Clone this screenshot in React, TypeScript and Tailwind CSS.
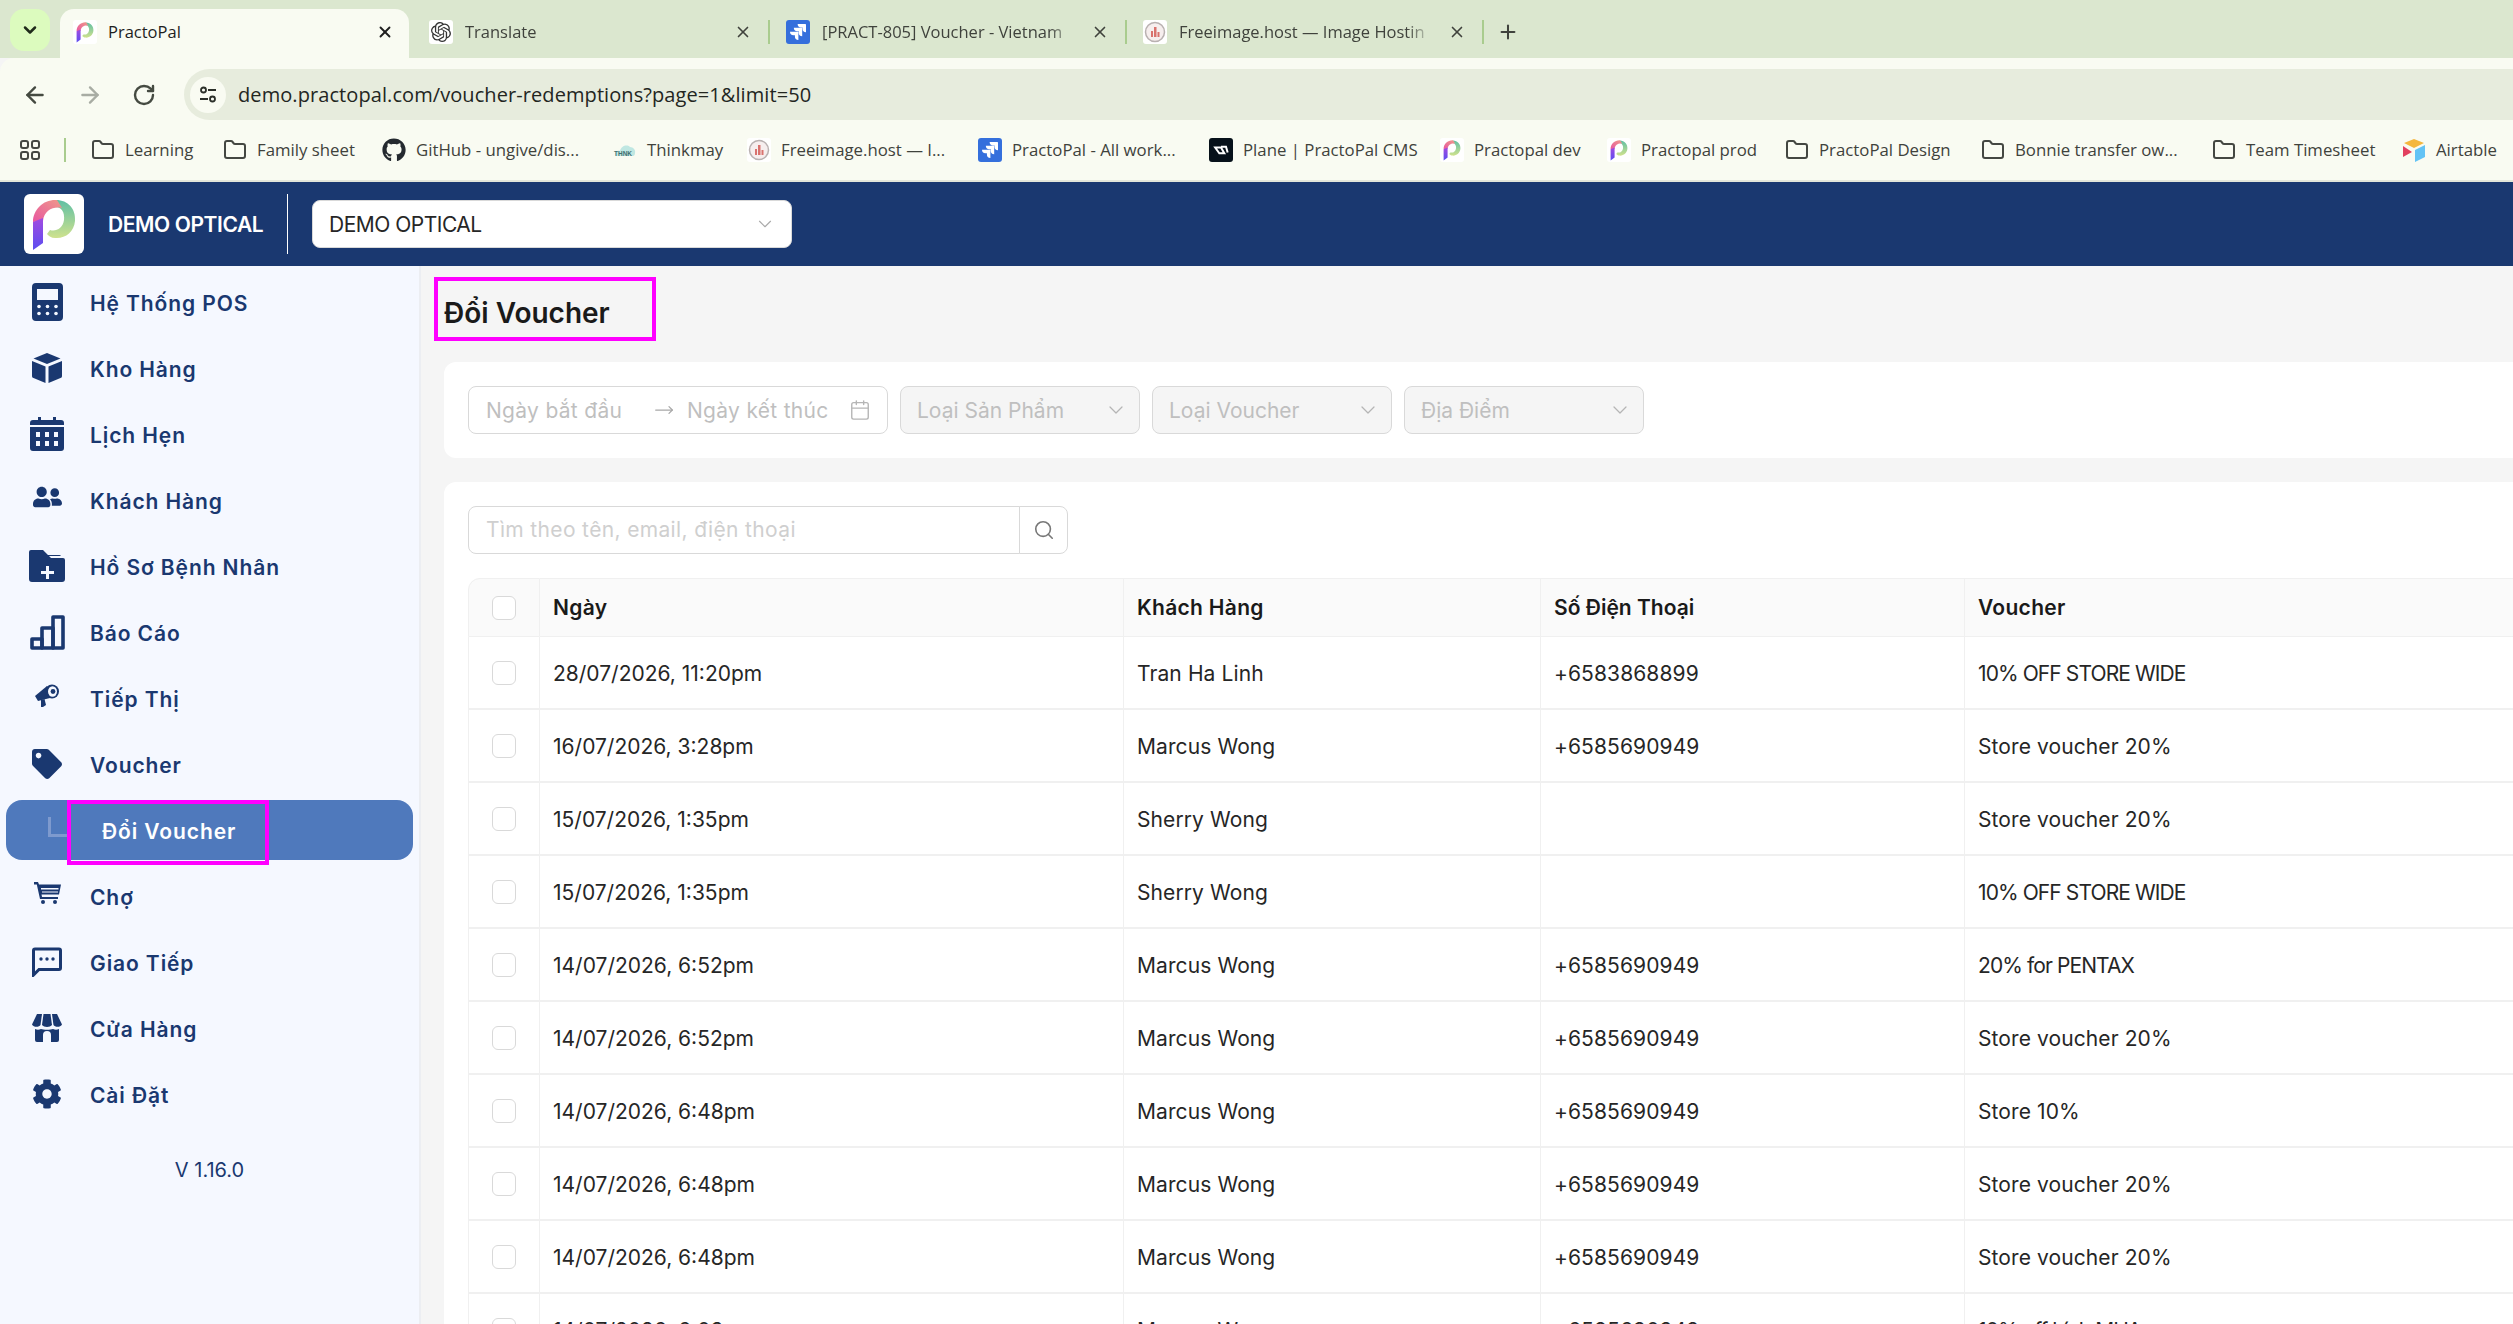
import { ArrowLeft, ArrowRight, Calendar, ChevronDown, Folder, MoveRight, Plus, RotateCw, Search, X } from 'lucide-react';
import { FaCog, FaGithub, FaTag, FaUserFriends } from 'react-icons/fa';
import { SiJira, SiOpenai } from 'react-icons/si';
import type { ReactNode } from 'react';

function PractoLogo({ className }: { className: string }) {
  return (
    <svg viewBox="0 0 60 60" className={className} fill="none">
      <defs>
        <linearGradient id="stemGrad" x1="0" y1="0" x2="0" y2="1">
          <stop offset="0" stopColor="#a14be0" />
          <stop offset="1" stopColor="#5b4df0" />
        </linearGradient>
        <linearGradient id="topGrad" x1="0" y1="1" x2="1" y2="0">
          <stop offset="0" stopColor="#e8569f" />
          <stop offset="1" stopColor="#ef9a8a" />
        </linearGradient>
        <linearGradient id="bowlGrad" x1="0" y1="0" x2="0" y2="1">
          <stop offset="0" stopColor="#5fbfa4" />
          <stop offset="1" stopColor="#cfe28e" />
        </linearGradient>
      </defs>
      <path d="M32 6C44 6 52 15 51 27C50 38 41 45 31 44C27 44 25 42 23 40L26 36C32 38 39 34 40 26C41 18 37 13 32 13Z" fill="url(#bowlGrad)" />
      <path d="M9 28C9 15 20 5 33 6L38 14C30 12 20 16 19 27Z" fill="url(#topGrad)" />
      <path d="M9 28L19 24V49L9 56Z" fill="url(#stemGrad)" />
    </svg>
  );
}

function Favicon({ children, className = 'bg-white' }: { children: ReactNode; className?: string }) {
  return <span className={`flex h-6 w-6 shrink-0 items-center justify-center rounded-[3px] ${className}`}>{children}</span>;
}

const jira = (
  <Favicon className="bg-[#356fdc]">
    <SiJira className="h-4 w-4 text-white" />
  </Favicon>
);

const freeimage = (
  <Favicon>
    <svg viewBox="0 0 24 24" className="h-6 w-6">
      <circle cx="12" cy="12" r="9.5" fill="#f6eeee" stroke="#b9b1b1" strokeWidth="1.5" />
      <path d="M8 17V11H10V17ZM11 17V7H13.5V17ZM14.5 17V12H16.5V17Z" fill="#d9726e" />
    </svg>
  </Favicon>
);

const practoIcon = (
  <Favicon>
    <PractoLogo className="h-6 w-6" />
  </Favicon>
);

const folder = <Folder className="h-6 w-6 shrink-0 text-[#444742]" strokeWidth={2} />;

const tabs = [
  { title: 'Translate', icon: <Favicon><SiOpenai className="h-5 w-5 text-[#333]" /></Favicon> },
  { title: '[PRACT-805] Voucher - Vietnam', icon: jira },
  { title: 'Freeimage.host — Image Hostin', icon: freeimage },
];

const bookmarks = [
  { label: 'Learning', icon: folder, width: 'w-[132px]' },
  { label: 'Family sheet', icon: folder, width: 'w-[159px]' },
  { label: 'GitHub - ungive/dis...', icon: <FaGithub className="h-6 w-6 shrink-0 text-[#24292f]" />, width: 'w-[231px]' },
  {
    label: 'Thinkmay',
    icon: (
      <svg viewBox="0 0 24 24" className="h-6 w-6 shrink-0">
        <path d="M3 18C1 15 4 12 7 13C8 8 14 6 17 9C20 9 23 12 22 15C22 17 21 18 20 18Z" fill="#bfe7e2" />
        <text x="1" y="18" fontSize="6.5" fontWeight="700" fill="#3f6f70" fontFamily="Liberation Sans">THNK</text>
      </svg>
    ),
    width: 'w-[134px]',
  },
  { label: 'Freeimage.host — I...', icon: freeimage, width: 'w-[231px]' },
  { label: 'PractoPal - All work...', icon: jira, width: 'w-[231px]' },
  {
    label: 'Plane | PractoPal CMS',
    icon: (
      <Favicon className="bg-[#07111a]">
        <svg viewBox="0 0 24 24" className="h-5 w-5" fill="none" stroke="#fff" strokeWidth="2.4">
          <path d="M5 9H12L16 16H10ZM12 8H18L20 15" />
        </svg>
      </Favicon>
    ),
    width: 'w-[231px]',
  },
  { label: 'Practopal dev', icon: practoIcon, width: 'w-[167px]' },
  { label: 'Practopal prod', icon: practoIcon, width: 'w-[178px]' },
  { label: 'PractoPal Design', icon: folder, width: 'w-[196px]' },
  { label: 'Bonnie transfer ow...', icon: folder, width: 'w-[231px]' },
  { label: 'Team Timesheet', icon: folder, width: 'w-[190px]' },
  {
    label: 'Airtable',
    icon: (
      <svg viewBox="0 0 24 24" className="h-6 w-6 shrink-0">
        <path d="M12 1L22 5L12 10L2 5Z" fill="#f4b73e" />
        <path d="M13 12L23 7V19L13 24Z" fill="#63c3f5" />
        <path d="M1 8V19L10 14Z" fill="#e2405f" />
      </svg>
    ),
    width: 'w-[100px]',
  },
];

const calculatorIcon = (
  <svg viewBox="0 0 31 38" className="h-[38px] w-[31px]">
    <path fillRule="evenodd" d="M4 0H27A4 4 0 0 1 31 4V34A4 4 0 0 1 27 38H4A4 4 0 0 1 0 34V4A4 4 0 0 1 4 0ZM5 6V17H26V6Z" fill="currentColor" />
    <g fill="#f5f8ff">
      <circle cx="7" cy="23.5" r="1.8" /><circle cx="15.5" cy="23.5" r="1.8" /><circle cx="24" cy="23.5" r="1.8" />
      <circle cx="7" cy="30.5" r="1.8" /><circle cx="15.5" cy="30.5" r="1.8" /><circle cx="24" cy="30.5" r="1.8" />
    </g>
  </svg>
);

const cubeIcon = (
  <svg viewBox="0 0 30 30" className="h-[30px] w-[30px]" fill="currentColor">
    <path d="M15 0L28.5 5.5L15 11L1.5 5.5Z" />
    <path d="M0 8L13.5 13.5V30L1.5 25A2 2 0 0 1 0 23Z" />
    <path d="M30 8L16.5 13.5V30L28.5 25A2 2 0 0 0 30 23Z" />
  </svg>
);

const calendarIcon = (
  <svg viewBox="0 0 34 34" className="h-[34px] w-[34px]">
    <path d="M8 0H11V3H23V0H26V3H31A3 3 0 0 1 34 6V8H0V6A3 3 0 0 1 3 3H8Z" fill="currentColor" />
    <path fillRule="evenodd" d="M0 10H34V31A3 3 0 0 1 31 34H3A3 3 0 0 1 0 31ZM6 15V20H10V15ZM15 15V20H19V15ZM24 15V20H28V15ZM6 24V29H10V24ZM15 24V29H19V24ZM24 24V29H28V24Z" fill="currentColor" />
  </svg>
);

const folderPlusIcon = (
  <svg viewBox="0 0 36 32" className="h-8 w-9">
    <path fillRule="evenodd" d="M2 0H14L19 5H30A2 2 0 0 1 32 6H20L22 8H34A2 2 0 0 1 36 10V29A3 3 0 0 1 33 32H3A3 3 0 0 1 0 29V2A2 2 0 0 1 2 0ZM17 16V21H12V24H17V29H20V24H25V21H20V16Z" fill="currentColor" />
  </svg>
);

const chartIcon = (
  <svg viewBox="0 0 35 35" className="h-[35px] w-[35px]" fill="none" stroke="currentColor" strokeWidth="3.6" strokeLinejoin="round">
    <rect x="2" y="24" width="10" height="9" />
    <rect x="12" y="13" width="11" height="20" />
    <rect x="23" y="2" width="10" height="31" />
  </svg>
);

const megaphoneIcon = (
  <svg viewBox="0 0 24 24" className="mb-[6px] h-6 w-6">
    <path d="M0 13L12 3L15 15L3 18Z" fill="currentColor" />
    <path d="M6 17L9.5 16L11 22L8 24H6Z" fill="currentColor" />
    <circle cx="17" cy="8.5" r="7" fill="currentColor" />
    <ellipse cx="17.5" cy="8.5" rx="4.5" ry="5.2" fill="#f5f8ff" />
    <circle cx="18" cy="8.5" r="2.4" fill="currentColor" />
  </svg>
);

const cartIcon = (
  <svg viewBox="0 0 27 22" className="mb-[6px] h-[22px] w-[27px]" fill="currentColor">
    <path d="M0 0H4L5 2.5H27L25 12.5H7.5L8 15H24V17H6L2.8 2.5H0Z" />
    <path d="M7 6H24.5V7.5H7ZM8 9.5H24V10.5H8Z" fill="#f5f8ff" />
    <circle cx="9" cy="20" r="2" /><circle cx="21" cy="20" r="2" />
  </svg>
);

const messageIcon = (
  <svg viewBox="0 0 30 30" className="h-[30px] w-[30px]">
    <path d="M3 2H27A1.5 1.5 0 0 1 28.5 3.5V21A1.5 1.5 0 0 1 27 22.5H7L1.5 28V3.5A1.5 1.5 0 0 1 3 2Z" fill="none" stroke="currentColor" strokeWidth="3" />
    <circle cx="9" cy="12" r="1.7" fill="currentColor" /><circle cx="15" cy="12" r="1.7" fill="currentColor" /><circle cx="21" cy="12" r="1.7" fill="currentColor" />
  </svg>
);

const storeIcon = (
  <svg viewBox="0 0 30 28" className="h-7 w-[30px]" fill="currentColor">
    <path d="M5 0H10L8.5 11C7 13.5 1.5 13.5 0 10.5Z" />
    <path d="M11.5 0H18.5L20 11C18 13.5 12 13.5 10 11Z" />
    <path d="M20 0H25L30 10.5C28.5 13.5 23 13.5 21.5 11Z" />
    <path d="M3 15C5 16 7 16 9 15C11 16 19 16 21 15C23 16 25 16 27 15V26A2 2 0 0 1 25 28H19V21A4 4 0 0 0 11 21V28H5A2 2 0 0 1 3 26Z" />
  </svg>
);

const menu = [
  { label: 'Hệ Thống POS', icon: calculatorIcon },
  { label: 'Kho Hàng', icon: cubeIcon },
  { label: 'Lịch Hẹn', icon: calendarIcon },
  { label: 'Khách Hàng', icon: <FaUserFriends className="mb-[6px] h-[26px] w-[29px]" /> },
  { label: 'Hồ Sơ Bệnh Nhân', icon: folderPlusIcon },
  { label: 'Báo Cáo', icon: chartIcon },
  { label: 'Tiếp Thị', icon: megaphoneIcon },
  { label: 'Voucher', icon: <FaTag className="h-[30px] w-[30px]" /> },
];

const menuAfter = [
  { label: 'Chợ', icon: cartIcon },
  { label: 'Giao Tiếp', icon: messageIcon },
  { label: 'Cửa Hàng', icon: storeIcon },
  { label: 'Cài Đặt', icon: <FaCog className="h-[30px] w-[30px]" /> },
];

const rows = [
  ['28/07/2026, 11:20pm', 'Tran Ha Linh', '+6583868899', '10% OFF STORE WIDE'],
  ['16/07/2026, 3:28pm', 'Marcus Wong', '+6585690949', 'Store voucher 20%'],
  ['15/07/2026, 1:35pm', 'Sherry Wong', '', 'Store voucher 20%'],
  ['15/07/2026, 1:35pm', 'Sherry Wong', '', '10% OFF STORE WIDE'],
  ['14/07/2026, 6:52pm', 'Marcus Wong', '+6585690949', '20% for PENTAX'],
  ['14/07/2026, 6:52pm', 'Marcus Wong', '+6585690949', 'Store voucher 20%'],
  ['14/07/2026, 6:48pm', 'Marcus Wong', '+6585690949', 'Store 10%'],
  ['14/07/2026, 6:48pm', 'Marcus Wong', '+6585690949', 'Store voucher 20%'],
  ['14/07/2026, 6:48pm', 'Marcus Wong', '+6585690949', 'Store voucher 20%'],
  ['14/07/2026, 6:03pm', 'Marcus Wong', '+6585690949', '10% off kính MUA'],
];

function MenuItem({ label, icon }: { label: string; icon: ReactNode }) {
  return (
    <div className="mx-[6px] mb-[6px] flex h-[60px] items-center">
      <span className="flex w-[84px] shrink-0 justify-center pr-[2px]">{icon}</span>
      <span className="pt-[3px] text-[21px] font-semibold tracking-[0.9px]">{label}</span>
    </div>
  );
}

function FilterSelect({ label }: { label: string }) {
  return (
    <div className="flex h-12 w-60 items-center justify-between rounded-lg border border-[#d9d9d9] bg-[#f5f5f5] pl-[16px] pr-[11px] text-[21px] text-[#bfbfbf]">
      <span className="pt-[2px]">{label}</span>
      <ChevronDown className="h-6 w-6 text-[#b5b5b5]" strokeWidth={1.25} />
    </div>
  );
}

function Checkbox() {
  return <span className="mx-auto block h-6 w-6 rounded-md border border-[#d9d9d9] bg-white" />;
}

export default function App() {
  return (
    <div className="flex h-[1324px] w-[2513px] flex-col overflow-hidden bg-[#f5f5f5] font-['Inter',sans-serif]">
      {/* Browser tabs */}
      <div className="flex h-[58px] shrink-0 items-start bg-[#dbe7cf] pl-[10px] pt-[9px] font-['Open_Sans',sans-serif] text-[16.5px] text-[#3f423c]">
        <button className="flex h-[42px] w-10 items-center justify-center rounded-[14px] bg-[#dcfbbe]">
          <ChevronDown className="h-5 w-5 text-[#1f2a1a]" strokeWidth={3} />
        </button>
        <div className="relative ml-[10px] mr-[3px] flex h-[49px] w-[349px] items-center rounded-t-[14px] bg-[#f9fbf2] pb-[3px] pl-[13px] pr-[15px] text-[#1f1f1f]">
          <Favicon><PractoLogo className="h-6 w-6" /></Favicon>
          <span className="ml-[11px] flex-1">PractoPal</span>
          <X className="h-[18px] w-[18px] text-[#1f1f1f]" strokeWidth={2.5} />
        </div>
        {tabs.map((tab) => (
          <div key={tab.title} className="flex h-[46px] w-[357px] shrink-0 items-center pl-[17px]">
            {tab.icon}
            <span className="ml-[12px] w-[253px] shrink-0 overflow-hidden whitespace-nowrap [mask-image:linear-gradient(to_right,black_90%,transparent)]">{tab.title}</span>
            <X className="ml-[16px] h-[18px] w-[18px] shrink-0" strokeWidth={2.2} />
            <span className="ml-[16px] h-6 w-[2px] shrink-0 bg-[#a9cc8e]" />
          </div>
        ))}
        <Plus className="ml-[14px] mt-[12px] h-[22px] w-[22px] text-[#3f423c]" strokeWidth={2.2} />
      </div>

      {/* Address bar */}
      <div className="flex h-[62px] shrink-0 items-end rounded-tl-[14px] bg-[#f9fbf2] pl-[22px]">
        <div className="flex h-[51px] items-center gap-[29px] text-[#454a41]">
          <ArrowLeft className="h-[26px] w-[26px]" strokeWidth={2.2} />
          <ArrowRight className="h-[26px] w-[26px] text-[#a8aca3]" strokeWidth={2.2} />
          <RotateCw className="h-[24px] w-[24px]" strokeWidth={2.4} />
        </div>
        <div className="ml-[28px] flex h-[51px] flex-1 items-center rounded-l-full bg-[#e7ecdd] pl-[6px]">
          <span className="flex h-9 w-9 items-center justify-center rounded-full bg-[#f9fbf2]">
            <svg viewBox="0 0 20 20" className="h-5 w-5" fill="none" stroke="#2b2f29" strokeWidth="1.8">
              <circle cx="5.5" cy="5" r="2.5" /><path d="M10 5H18M2 14H10" /><circle cx="14.5" cy="14" r="2.5" />
            </svg>
          </span>
          <span className="ml-[12px] font-['Open_Sans',sans-serif] text-[20px] tracking-[0.08px] text-[#23261f]">demo.practopal.com/voucher-redemptions?page=1&amp;limit=50</span>
        </div>
      </div>

      {/* Bookmarks */}
      <div className="flex h-[62px] shrink-0 items-center border-b-2 border-[#e3e6da] bg-[#f9fbf2] pl-[19px] font-['Open_Sans',sans-serif] text-[16.8px] text-[#3f423c]">
        <svg viewBox="0 0 22 22" className="h-[22px] w-[22px] shrink-0" fill="none" stroke="#444742" strokeWidth="2">
          <rect x="2" y="2" width="7" height="7" rx="2" /><rect x="13" y="2" width="7" height="7" rx="2" />
          <rect x="2" y="13" width="7" height="7" rx="2" /><rect x="13" y="13" width="7" height="7" rx="2" />
        </svg>
        <span className="ml-[23px] h-6 w-[2px] shrink-0 bg-[#a9cc8e]" />
        <div className="ml-[25px] flex">
          {bookmarks.map((b) => (
            <div key={b.label} className={`flex shrink-0 items-center gap-[10px] whitespace-nowrap ${b.width}`}>
              {b.icon}
              <span>{b.label}</span>
            </div>
          ))}
        </div>
      </div>

      {/* App header */}
      <header className="flex h-[84px] shrink-0 items-center bg-[#1a3870] pl-6">
        <span className="flex h-[60px] w-[60px] items-center justify-center rounded-md bg-white">
          <PractoLogo className="h-[60px] w-[60px]" />
        </span>
        <span className="ml-6 w-[179px] pt-[2px] text-[21px] font-semibold tracking-[-0.4px] text-white">DEMO OPTICAL</span>
        <span className="h-[60px] w-px bg-white" />
        <div className="ml-6 flex h-12 w-[480px] items-center justify-between rounded-lg border border-[#d9d9d9] bg-white pl-[16px] pr-[15px] text-[21px] tracking-[-0.5px] text-[#262626]">
          <span className="pt-[2px]">DEMO OPTICAL</span>
          <ChevronDown className="h-[22px] w-[22px] text-[#aaa]" strokeWidth={1.25} />
        </div>
      </header>

      <div className="flex min-h-0 flex-1">
        {/* Sidebar */}
        <aside className="w-[421px] shrink-0 border-r-2 border-[#eceef2] bg-[#f5f8ff] pt-[6px] text-[#1a3870]">
          {menu.map((item) => (
            <MenuItem key={item.label} {...item} />
          ))}
          <div className="relative mx-[6px] mb-[6px] flex h-[60px] items-center rounded-2xl bg-[#4f79bc]">
            <span className="ml-[42px] mb-[6px] h-[20px] w-[20px] border-b-[3px] border-l-[3px] border-[#7e9ace]" />
            <span className="ml-[34px] pt-[3px] text-[21px] font-semibold tracking-[0.9px] text-white">Đổi Voucher</span>
            <span className="absolute left-[61px] top-0 h-[65px] w-[202px] border-4 border-[#ff00ff]" />
          </div>
          {menuAfter.map((item) => (
            <MenuItem key={item.label} {...item} />
          ))}
          <p className="mt-[31px] text-center text-[20px]">V 1.16.0</p>
        </aside>

        {/* Content */}
        <main className="min-w-0 flex-1 overflow-hidden pl-[23px]">
          <div className="relative h-[96px]">
            <span className="absolute -left-[10px] top-[11px] h-[64px] w-[222px] border-4 border-[#ff00ff]" />
            <h1 className="pt-[29px] text-[28px] leading-[36px] font-semibold text-[#1a1a1a]">Đổi Voucher</h1>
          </div>

          <div className="flex h-[96px] w-[2300px] items-center gap-3 rounded-xl bg-white pl-6">
            <div className="flex h-12 w-[420px] items-center rounded-lg border border-[#d9d9d9] bg-white pl-[17px] pr-[16px] text-[21px] tracking-[0.3px] text-[#bfbfbf]">
              <span className="w-[168px] pt-[2px]">Ngày bắt đầu</span>
              <MoveRight className="mr-[13px] h-5 w-5 text-[#a8a8a8]" strokeWidth={1.5} />
              <span className="w-[162px] pt-[2px]">Ngày kết thúc</span>
              <Calendar className="h-[22px] w-[22px] text-[#b5b5b5]" strokeWidth={1.5} />
            </div>
            <FilterSelect label="Loại Sản Phẩm" />
            <FilterSelect label="Loại Voucher" />
            <FilterSelect label="Địa Điểm" />
          </div>

          <div className="mt-6 w-[2300px] rounded-t-xl bg-white pl-6 pt-6">
            <div className="flex h-12 w-[600px]">
              <div className="flex flex-1 items-center rounded-l-lg border border-[#d9d9d9] bg-white pl-[17px] text-[21px] tracking-[0.35px] text-[#cfcfcf]">Tìm theo tên, email, điện thoại</div>
              <div className="-ml-px flex w-[49px] items-center justify-center rounded-r-lg border border-[#d9d9d9] bg-white">
                <Search className="h-[22px] w-[22px] text-[#777]" strokeWidth={1.75} />
              </div>
            </div>

            <table className="mt-6 w-[2276px] table-fixed border-separate border-spacing-0 text-[21px] text-[#262626]">
              <colgroup>
                <col className="w-[72px]" />
                <col className="w-[584px]" />
                <col className="w-[417px]" />
                <col className="w-[424px]" />
                <col />
              </colgroup>
              <thead>
                <tr className="h-[59px] bg-[#fafafa] text-left text-[#1a1a1a]">
                  <th className="rounded-tl-xl border-y border-l border-r border-[#f0f0f0]"><Checkbox /></th>
                  <th className="border-y border-r border-[#f0f0f0] pl-[13px] font-semibold tracking-[0.3px]">Ngày</th>
                  <th className="border-y border-r border-[#f0f0f0] pl-[13px] font-semibold tracking-[0.3px]">Khách Hàng</th>
                  <th className="border-y border-r border-[#f0f0f0] pl-[13px] font-semibold">Số Điện Thoại</th>
                  <th className="border-y border-[#f0f0f0] pl-[13px] font-semibold tracking-[0.3px]">Voucher</th>
                </tr>
              </thead>
              <tbody>
                {rows.map((row, i) => (
                  <tr key={i} className="h-[73px]">
                    <td className="border-b-2 border-l border-r border-[#f0f0f0]"><Checkbox /></td>
                    <td className="border-b-2 border-r border-[#f0f0f0] pl-[13px] pt-[2px]">{row[0]}</td>
                    <td className="border-b-2 border-r border-[#f0f0f0] pl-[13px] pt-[2px] tracking-[0.1px]">{row[1]}</td>
                    <td className="border-b-2 border-r border-[#f0f0f0] pl-[13px] pt-[2px] tracking-[0.1px]">{row[2]}</td>
                    <td className={`border-b-2 border-[#f0f0f0] pl-[13px] pt-[2px] ${/[A-Z]{3}/.test(row[3]) ? 'tracking-[-0.9px]' : 'tracking-[0.1px]'}`}>{row[3]}</td>
                  </tr>
                ))}
              </tbody>
            </table>
          </div>
        </main>
      </div>
    </div>
  );
}
